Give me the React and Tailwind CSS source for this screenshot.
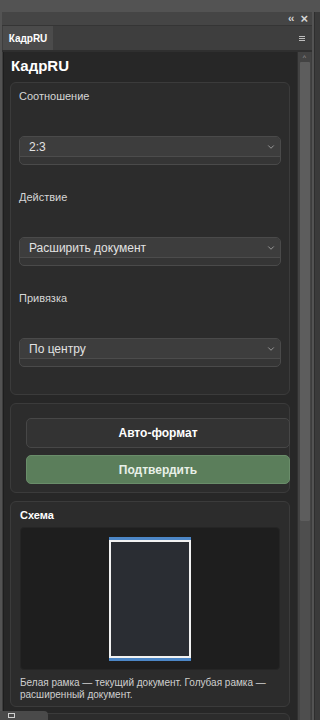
import { ChevronDown } from "lucide-react"

const font = { fontFamily: '"Liberation Sans", Arial, sans-serif' }

function Select({ value }) {
  return (
    <div className="mt-[33px] mx-[8px] h-[29px] rounded-[5px] border border-[#4a4a4a] bg-[#353535] overflow-hidden flex flex-col">
      <div className="h-[20px] bg-[#3d3d3d] border-b border-[#4c4c4c] flex items-center justify-between pl-[9px] pr-[4px]">
        <span className="text-[12px] text-[#e2e2e2]">{value}</span>
        <ChevronDown size={10} strokeWidth={2} className="text-[#a8a8a8]" />
      </div>
    </div>
  )
}

function Field({ label, value, first }) {
  return (
    <div className={first ? "" : "mt-[25px]"}>
      <div className="px-[8px] text-[11px] leading-[14px] text-[#d6d6d6]">{label}</div>
      <Select value={value} />
    </div>
  )
}

export default function App() {
  return (
    <div className="w-[320px] h-[720px] bg-[#535353] overflow-hidden pt-[12px] relative" style={font}>
      <div className="ml-[2px] w-[310px] h-[708px] bg-[#3d3d3d] flex flex-col">
        {/* panel header */}
        <div className="h-[13px] bg-[#454545] flex items-center justify-end gap-[7px] pr-[4px] text-[#d4d4d4]">
          <span className="text-[11px] leading-none font-bold tracking-[-1px]">‹‹</span>
          <span className="text-[13px] leading-none font-bold">×</span>
        </div>
        <div className="h-[25px] bg-[#3e3e3e] border-t border-[#353535] flex items-stretch justify-between">
          <div className="ml-[1px] w-[50px] bg-[#4b4b4b] flex items-center justify-center text-[10px] font-bold text-white">
            КадрRU
          </div>
          <div className="flex flex-col justify-center gap-[1px] pr-[7px]">
            <div className="w-[6px] h-[1px] bg-[#bdbdbd]" />
            <div className="w-[6px] h-[1px] bg-[#bdbdbd]" />
            <div className="w-[6px] h-[1px] bg-[#bdbdbd]" />
          </div>
        </div>
        <div className="flex-1 flex border-t-2 border-[#2f2f2f] min-h-0">
          {/* content */}
          <div className="w-[294px] ml-[1px] bg-[#272727] border-l border-[#1e1e1e] overflow-hidden pl-[6px] pr-[6px]">
            <div className="pt-[4px] pl-[1px] text-[15px] font-bold text-white leading-[20px]">КадрRU</div>

            <div className="mt-[6px] w-[280px] h-[313px] rounded-[6px] border border-[#3b3b3b] bg-[#2c2c2c] pt-[6px]">
              <Field first label="Соотношение" value="2:3" />
              <Field label="Действие" value="Расширить документ" />
              <Field label="Привязка" value="По центру" />
            </div>

            <div className="mt-[8px] w-[280px] h-[90px] rounded-[6px] border border-[#3b3b3b] bg-[#2c2c2c] pt-[14px] pl-[15px] flex flex-col gap-[7px]">
              <div className="w-[264px] h-[30px] rounded-[5px] border border-[#474747] bg-[#333333] flex items-center justify-center text-[12px] font-bold text-white">
                Авто-формат
              </div>
              <div className="w-[264px] h-[29px] rounded-[5px] border border-[#6a8d6a] bg-[#5b7e5b] flex items-center justify-center text-[12px] font-bold text-[#e8f0e8]">
                Подтвердить
              </div>
            </div>

            <div className="mt-[8px] w-[280px] h-[206px] rounded-[6px] border border-[#3b3b3b] bg-[#2c2c2c] pt-[6px] px-[9px]">
              <div className="text-[11px] font-bold text-white leading-[14px]">Схема</div>
              <div className="mt-[5px] h-[143px] rounded-[4px] bg-[#1e1e1e] border border-[#252525] flex items-center justify-center">
                <div className="w-[82px] h-[124px] bg-[#2b2f36] border-y-[3px] border-[#4c86c6] flex">
                  <div className="flex-1 border-2 border-[#f2f2f2] bg-[#2a2d33]" />
                </div>
              </div>
              <div className="mt-[7px] text-[10px] leading-[12px] text-[#cfcfcf]">
                Белая рамка — текущий документ. Голубая рамка — расширенный документ.
              </div>
            </div>

            <div className="mt-[6px] w-[280px] h-[20px] rounded-t-[6px] border border-[#3b3b3b] bg-[#2c2c2c]" />
          </div>
          {/* scrollbar */}
          <div className="w-[14px] bg-[#434343] border-l border-[#303030] flex flex-col items-center pt-[2px]">
            <div className="text-[7px] leading-[8px] text-[#9a9a9a]">^</div>
            <div className="w-[10px] h-[459px] bg-[#5d5d5d] rounded-[1px]" />
            <div className="w-[10px] flex-1 bg-[#4e4e4e]" />
          </div>
        </div>
      </div>
      <div className="absolute right-0 top-[12px] w-[6px] h-[708px] bg-[#3a3a3a] border-l border-[#2e2e2e]" />
      <div className="absolute left-0 bottom-0 w-[48px] h-[9px] bg-[#4a4a4a] rounded-tr-[4px] flex items-center pl-[8px]">
        <div className="w-[7px] h-[5px] border border-[#cfcfcf]" />
      </div>
    </div>
  )
}
